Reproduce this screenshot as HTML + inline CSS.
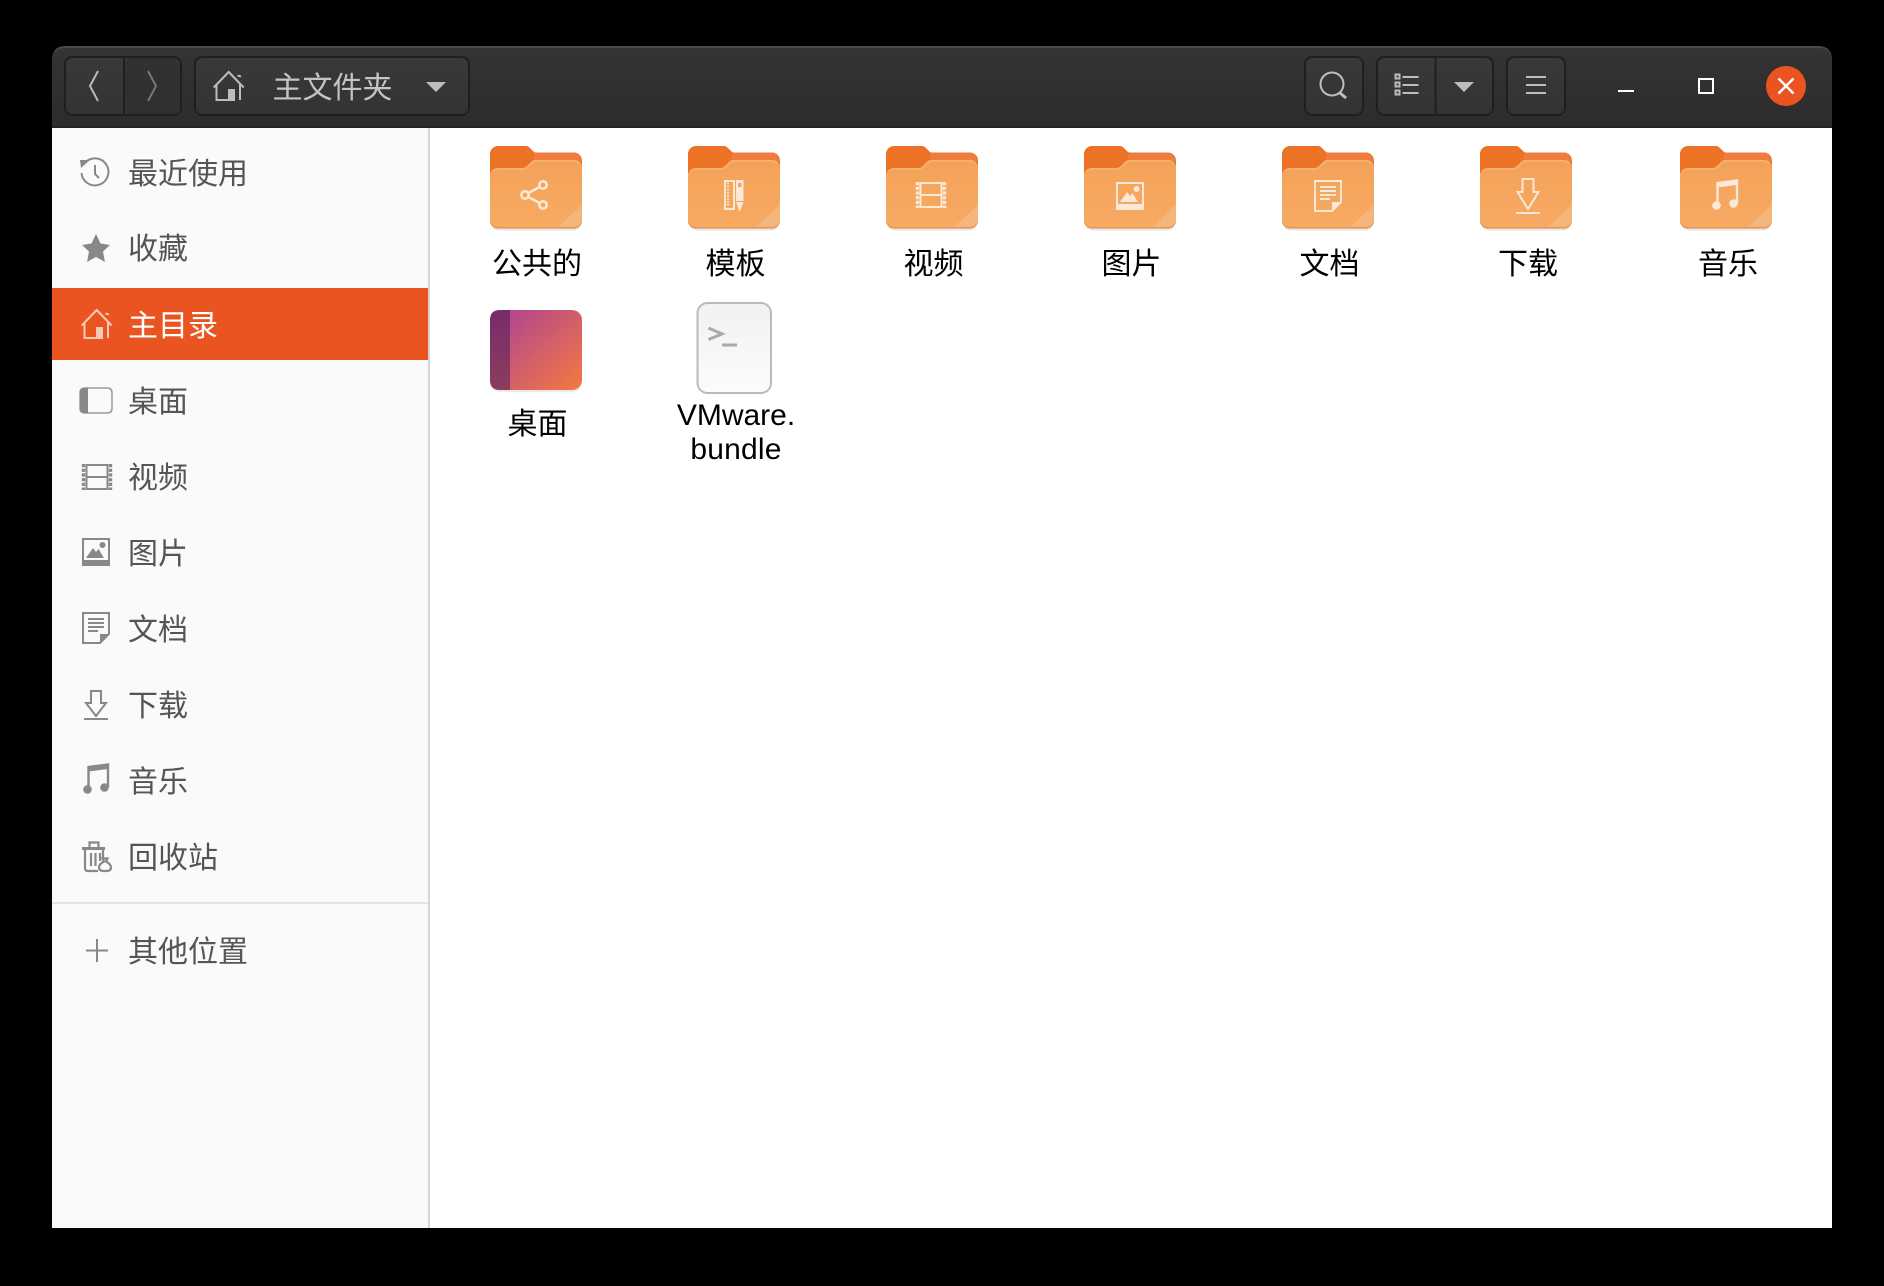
<!DOCTYPE html>
<html lang="zh"><head><meta charset="utf-8"><title>主文件夹</title>
<style>
html,body{margin:0;padding:0;background:#000;width:1884px;height:1286px;overflow:hidden}
svg{display:block}
text{font-family:"Liberation Sans","Noto Sans CJK SC",sans-serif;font-size:30px}
.s{fill:#555}
.l{fill:#000;text-anchor:middle}
</style></head><body>
<svg width="1884" height="1286" viewBox="0 0 1884 1286" xmlns="http://www.w3.org/2000/svg">
<defs>
<linearGradient id="hb" x1="0" y1="0" x2="0" y2="1"><stop offset="0" stop-color="#363432"/><stop offset="1" stop-color="#2e2c2b"/></linearGradient>
<linearGradient id="btn" x1="0" y1="0" x2="0" y2="1"><stop offset="0" stop-color="#3a3838"/><stop offset="1" stop-color="#343232"/></linearGradient>
<linearGradient id="ff" x1="0" y1="0" x2="0" y2="1"><stop offset="0" stop-color="#f4a258"/><stop offset="1" stop-color="#f7aa63"/></linearGradient>
<linearGradient id="dk" gradientUnits="userSpaceOnUse" x1="510" y1="310" x2="582" y2="390"><stop offset="0" stop-color="#b3468f"/><stop offset="1" stop-color="#f47a40"/></linearGradient>
<linearGradient id="dband" x1="0" y1="0" x2="0" y2="1"><stop offset="0" stop-color="#772c6c"/><stop offset="1" stop-color="#8c3c5d"/></linearGradient>
<linearGradient id="tm" x1="0" y1="0" x2="0" y2="1"><stop offset="0" stop-color="#f1f1f1"/><stop offset="1" stop-color="#fcfcfc"/></linearGradient>
<symbol id="folder" width="92" height="86" viewBox="0 0 92 86" overflow="visible">
<rect x="1" y="70" width="90" height="14.500" rx="8" fill="#000" opacity=".1"/>
<path d="M8 0H36Q38 0 39.500 1.500L43 5Q44 6.500 46 6.500H84C88.400 6.500 92 10 92 14.500V40H0V8C0 3.600 3.600 0 8 0Z" fill="#ec7226"/>
<path d="M44 6.500H84C88.400 6.500 92 10 92 14.500V16H44Z" fill="#f0854a" opacity=".6"/>
<path d="M8 22H33Q35 22 36.500 20.500L41 16Q43 14 45 14H84C88.400 14 92 17.600 92 22V74.500C92 78.900 88.400 82.500 84 82.500H8C3.600 82.500 0 78.900 0 74.500V30C0 25.600 3.600 22 8 22Z" fill="url(#ff)"/>
<path d="M8 22H33Q35 22 36.500 20.500L41 16Q43 14 45 14H84C88.400 14 92 17.600 92 22V23.500C92 19 88.400 15.500 84 15.500H45Q43.500 15.500 42 17L37.500 21.500Q36 23.500 33.500 23.500H8C3.600 23.500 0 27 0 31.500V30C0 25.600 3.600 22 8 22Z" fill="#f7b377"/>
<path d="M68 81H84C88.400 81 92 77.500 92 73V59Z" fill="#f5b67c"/>
<path d="M0 73C0 77.400 3.600 81 8 81H84C88.400 81 92 77.400 92 73V74.500C92 78.900 88.400 82.500 84 82.500H8C3.600 82.500 0 78.900 0 74.500Z" fill="#e9924c"/>
</symbol>
<symbol id="home" width="32" height="30" viewBox="0 0 32 30" overflow="visible">
<path d="M.7 16.500L15.700 1 30.700 16.500M3.500 13V29H15M27 13.500V29M24.500 4.500L28 5.500" fill="none" stroke="currentColor" stroke-width="2"/>
<path d="M15 18H22V30H15Z" fill="currentColor"/>
</symbol>
<symbol id="film" width="30" height="26" viewBox="0 0 30 26" overflow="visible">
<path d="M4.500 1H25.500V25H4.500ZM4.500 13H25.500" fill="none" stroke="currentColor" stroke-width="2"/>
<path d="M1.500 0V26M28.500 0V26" fill="none" stroke="currentColor" stroke-width="3.400" stroke-dasharray="3.200 1.500"/>
</symbol>
<symbol id="image" width="28" height="28" viewBox="0 0 28 28" overflow="visible">
<path d="M0 0H28V28H0ZM2 2V22H26V2Z" fill="currentColor" fill-rule="evenodd"/>
<path d="M4 20L11 10 14 14 16.500 11 22 20Z" fill="currentColor"/>
<circle cx="20.500" cy="7" r="3" fill="currentColor"/>
</symbol>
<symbol id="doc" width="28" height="32" viewBox="0 0 28 32" overflow="visible">
<path d="M1 1H27V22L18 31H1Z" fill="none" stroke="currentColor" stroke-width="2"/>
<path d="M6 7H22M6 11H22M6 15H22M6 19H16" fill="none" stroke="currentColor" stroke-width="2"/>
<path d="M18 31V22H27Z" fill="currentColor"/>
</symbol>
<symbol id="dlicon" width="24" height="30" viewBox="0 0 24 30" overflow="visible">
<path d="M7 1H17V13H22L12 26 2 13H7Z" fill="none" stroke="currentColor" stroke-width="2"/>
<path d="M0 29H24" stroke="currentColor" stroke-width="2"/>
</symbol>
<symbol id="dlbig" width="24" height="36" viewBox="0 0 24 36" overflow="visible">
<path d="M6.500 1H17.500V14H22.500L12 31 1.500 14H6.500Z" fill="none" stroke="currentColor" stroke-width="2"/>
<path d="M0 35H24" stroke="currentColor" stroke-width="2"/>
</symbol>
<symbol id="music" width="26" height="30" viewBox="0 0 26 30" overflow="visible">
<path d="M5.500 25V3L25 .5V23" fill="none" stroke="currentColor" stroke-width="2.400"/>
<path d="M5.500 4L25 1.500V5L5.500 7.500Z" fill="currentColor"/>
<ellipse cx="4.500" cy="25.500" rx="4.300" ry="4.300" fill="currentColor"/>
<ellipse cx="21.500" cy="23.500" rx="4.300" ry="4.300" fill="currentColor"/>
</symbol>
</defs>

<rect width="1884" height="1286" fill="#000"/>
<!-- window -->
<path d="M52 128V60Q52 46 66 46H1818Q1832 46 1832 60V128Z" fill="url(#hb)"/>
<path d="M52 60Q52 46 66 46H1818Q1832 46 1832 60Q1832 48 1818 48H66Q52 48 52 60Z" fill="#4b4947"/>
<rect x="52" y="126.500" width="1780" height="1.500" fill="#232120"/>
<rect x="52" y="128" width="1780" height="1100" fill="#fff"/>
<rect x="52" y="128" width="376" height="1100" fill="#f9fbfa"/>
<rect x="428" y="128" width="2" height="1100" fill="#d5d6d5"/>

<!-- toolbar buttons -->
<g fill="url(#btn)" stroke="#201f1f" stroke-width="2">
<rect x="65" y="57" width="116" height="58" rx="7"/>
<rect x="195" y="57" width="274" height="58" rx="7"/>
<rect x="1305" y="57" width="58" height="58" rx="7"/>
<rect x="1377" y="57" width="116" height="58" rx="7"/>
<rect x="1507" y="57" width="58" height="58" rx="7"/>
</g>
<rect x="123" y="57" width="2" height="58" fill="#201f1f"/>
<rect x="1434.500" y="57" width="2" height="58" fill="#201f1f"/>
<rect x="125" y="58" width="55" height="56" rx="5" fill="#302e2e" opacity=".7"/>
<path d="M98 71L90 86 98 101" fill="none" stroke="#b9b9b9" stroke-width="2"/>
<path d="M148 71L156 86 148 101" fill="none" stroke="#777" stroke-width="2"/>
<use href="#home" x="213" y="71" color="#bdbdbd"/>
<text x="272.500" y="98" style="fill:#c4c4c4">主文件夹</text>
<path d="M426 82H446L436 92Z" fill="#bdbdbd"/>
<!-- search -->
<circle cx="1332" cy="84" r="11.500" fill="none" stroke="#bdbdbd" stroke-width="2"/>
<path d="M1340 93L1346 98" stroke="#bdbdbd" stroke-width="3"/>
<!-- list view -->
<g fill="none" stroke="#bdbdbd">
<path d="M1395.500 74.500h4v4h-4zM1395.500 82.500h4v4h-4zM1395.500 90.500h4v4h-4z" stroke-width="2"/>
<path d="M1402.500 77h16M1402.500 85h16M1402.500 93h16" stroke-width="2"/>
</g>
<path d="M1454 82H1474L1464 92Z" fill="#bdbdbd"/>
<path d="M1526 77h20M1526 85h20M1526 93h20" stroke="#bdbdbd" stroke-width="2"/>
<!-- window controls -->
<rect x="1618" y="90" width="16" height="2" fill="#fff"/>
<rect x="1699" y="79" width="14" height="14" fill="none" stroke="#fff" stroke-width="2"/>
<circle cx="1786" cy="86" r="20" fill="#e95420"/>
<path d="M1778.500 78.500L1793.500 93.500M1793.500 78.500L1778.500 93.500" stroke="#fff" stroke-width="2.400"/>

<!-- sidebar -->
<rect x="52" y="288" width="376" height="72" fill="#e95420"/>
<g color="#888">
<path d="M84 164A13.500 13.500 0 1 1 81.500 173" fill="none" stroke="#888" stroke-width="2"/>
<path d="M80 160L90 160 81 168Z" fill="#888"/>
<path d="M95 165V174L99 178" fill="none" stroke="#888" stroke-width="2"/>
<path d="M96 234L100.500 243.500 110 245 103 251.500 105 262 96 257 87 262 89 251.500 82 245 91.500 243.500Z" fill="#888"/>
<use href="#home" x="81" y="309" color="#f9c9b8"/>
<path d="M85 388H107Q112 388 112 393V408Q112 413 107 413H85Q80 413 80 408V393Q80 388 85 388Z" fill="none" stroke="#999" stroke-width="1.500"/>
<path d="M85 388H88V413H85Q80 413 80 408V393Q80 388 85 388Z" fill="#888"/>
<use href="#film" x="82" y="464"/>
<use href="#image" x="82" y="538"/>
<use href="#doc" x="82" y="612"/>
<use href="#dlicon" x="84" y="690"/>
<use href="#music" x="83" y="764"/>
<g fill="none" stroke="#888" stroke-width="2.200">
<path d="M82 848.500H105" stroke-width="3"/>
<path d="M89.500 848V842.500H98.500V848"/>
<path d="M85 849V868Q85 871 88 871H98M103 849V859"/>
<path d="M91 853V866M95.500 853V866M100 853V861"/>
<path d="M102.500 858.500H107.500L106 861.500Q111 864 111 867.500Q111 871 106 871H104Q99 871 99 867.500Q99 864 104 861.500Z"/>
</g>
<path d="M97 939V962M86 950.500H108" stroke="#888" stroke-width="2"/>
</g>
<rect x="52" y="902" width="376" height="2" fill="#e2e3e2"/>
<text class="s" x="128" y="184">最近使用</text>
<text class="s" x="128" y="259">收藏</text>
<text x="128" y="336" style="fill:#fff">主目录</text>
<text class="s" x="128" y="412">桌面</text>
<text class="s" x="128" y="488">视频</text>
<text class="s" x="128" y="564">图片</text>
<text class="s" x="128" y="640">文档</text>
<text class="s" x="128" y="716">下载</text>
<text class="s" x="128" y="792">音乐</text>
<text class="s" x="128" y="868">回收站</text>
<text class="s" x="128" y="962">其他位置</text>

<!-- folders -->
<use href="#folder" x="490" y="146"/>
<use href="#folder" x="688" y="146"/>
<use href="#folder" x="886" y="146"/>
<use href="#folder" x="1084" y="146"/>
<use href="#folder" x="1282" y="146"/>
<use href="#folder" x="1480" y="146"/>
<use href="#folder" x="1680" y="146"/>
<g color="#fbe8d6">
<!-- share -->
<g fill="none" stroke="#fbe8d6" stroke-width="2.500">
<circle cx="543" cy="185" r="3.700"/><circle cx="525" cy="195" r="3.700"/><circle cx="543" cy="205" r="3.700"/>
<path d="M528.500 193L539.500 187M528.500 197L539.500 203"/>
</g>
<!-- template -->
<path d="M725 181H734V209H725Z" fill="none" stroke="#fbe8d6" stroke-width="2"/>
<path d="M728 183v24" stroke="#fbe8d6" stroke-width="2" stroke-dasharray="1.500 1.500"/>
<path d="M736 180H743.500V202L739.700 212 736 202Z" fill="#fbe8d6"/>
<rect x="738" y="183" width="3.500" height="4" fill="#f5a55e"/>
<rect x="736" y="201" width="7.500" height="1" fill="#f5a55e"/>
<use href="#film" x="916" y="182"/>
<use href="#image" x="1116" y="182"/>
<use href="#doc" x="1314" y="180"/>
<use href="#dlbig" x="1516" y="178"/>
<use href="#music" x="1712" y="180"/>
</g>
<text class="l" x="537" y="274">公共的</text>
<text class="l" x="735.500" y="274">模板</text>
<text class="l" x="933.500" y="274">视频</text>
<text class="l" x="1131.500" y="274">图片</text>
<text class="l" x="1329.500" y="274">文档</text>
<text class="l" x="1528" y="274">下载</text>
<text class="l" x="1728" y="274">音乐</text>

<!-- desktop folder -->
<rect x="490" y="312" width="92" height="80" rx="10" fill="#000" opacity=".08"/>
<rect x="490" y="310" width="92" height="80" rx="10" fill="url(#dk)"/>
<path d="M500 310H510V390H500Q490 390 490 380V320Q490 310 500 310Z" fill="url(#dband)"/>
<text class="l" x="537.500" y="434">桌面</text>
<!-- terminal -->
<rect x="697.500" y="303" width="73.500" height="90" rx="10" fill="url(#tm)" stroke="#bbb" stroke-width="2"/>
<path d="M708.500 328L722 334 708.500 339.500" fill="none" stroke="#aaa" stroke-width="3"/>
<rect x="722" y="343.500" width="15" height="3" fill="#aaa"/>
<text class="l" x="736" y="425">VMware.</text>
<text class="l" x="736" y="459" style="letter-spacing:.2px">bundle</text>
</svg>
</body></html>
